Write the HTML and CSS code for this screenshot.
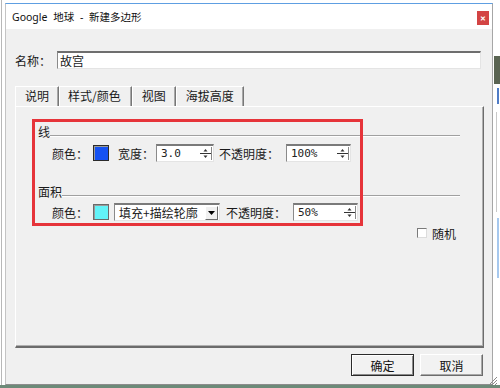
FILE: index.html
```html
<!DOCTYPE html>
<html lang="zh-CN">
<head>
  <meta charset="UTF-8" />
  <title>Google 地球 - 新建多边形</title>
  <link rel="stylesheet" href="styles.css">
</head>
<body>

<div class="screen">
  <div class="desk">
    <div class="window">
      <div class="titlebar">
        <span class="title">Google 地球 - 新建多边形</span>
        <span class="close">&#x2715;</span>
      </div>

      <div class="client">
        <div class="name-row">
          <label>名称：</label>
          <div class="textbox">故宫</div>
        </div>

        <div class="tabs">
          <div class="tab">说明</div>
          <div class="tab active">样式/颜色</div>
          <div class="tab">视图</div>
          <div class="tab">海拔高度</div>
        </div>

        <div class="panel">
          <div class="group-title">线</div>
          <div class="row">
            <span class="lbl">颜色：</span>
            <span class="swatch blue"></span>
            <span class="lbl gap">宽度：</span>
            <div class="spin w-width">
              <span class="val">3.0</span>
              <svg class="spinner" width="13" height="13" viewBox="0 0 13 13">
                <polygon points="6.5,2 4.5,4.5 8.5,4.5" fill="#333"/>
                <line x1="1" y1="6.5" x2="12" y2="6.5" stroke="#333"/>
                <polygon points="4.5,8.5 8.5,8.5 6.5,11" fill="#333"/>
                <line x1="12.5" y1="0" x2="12.5" y2="13" stroke="#888"/>
              </svg>
            </div>
            <span class="lbl gap-s">不透明度：</span>
            <div class="spin w-op">
              <span class="val">100%</span>
              <svg class="spinner" width="13" height="13" viewBox="0 0 13 13">
                <polygon points="6.5,2 4.5,4.5 8.5,4.5" fill="#333"/>
                <line x1="1" y1="6.5" x2="12" y2="6.5" stroke="#333"/>
                <polygon points="4.5,8.5 8.5,8.5 6.5,11" fill="#333"/>
                <line x1="12.5" y1="0" x2="12.5" y2="13" stroke="#888"/>
              </svg>
            </div>
          </div>

          <div class="group-title second">面积</div>
          <div class="row tight">
            <span class="lbl">颜色：</span>
            <span class="swatch cyan"></span>
            <div class="combo">
              <span class="val">填充+描绘轮廓</span>
              <span class="arrow">
                <svg width="7" height="4" viewBox="0 0 7 4"><polygon points="0,0 7,0 3.5,4" fill="#000"/></svg>
              </span>
            </div>
            <span class="lbl gap-m">不透明度：</span>
            <div class="spin w-op">
              <span class="val">50%</span>
              <svg class="spinner" width="13" height="13" viewBox="0 0 13 13">
                <polygon points="6.5,2 4.5,4.5 8.5,4.5" fill="#333"/>
                <line x1="1" y1="6.5" x2="12" y2="6.5" stroke="#333"/>
                <polygon points="4.5,8.5 8.5,8.5 6.5,11" fill="#333"/>
                <line x1="12.5" y1="0" x2="12.5" y2="13" stroke="#888"/>
              </svg>
            </div>
          </div>

          <label class="check">
            <span class="box"></span>
            <span>随机</span>
          </label>

          <!-- anotación roja sobre el grupo -->
          <div class="mark"></div>
        </div>

        <div class="actions">
          <button class="btn default">确定</button>
          <button class="btn">取消</button>
        </div>
      </div>
    </div>

    <div class="backdrop">
      <span class="bd-photo"></span>
      <span class="bd-icon"></span>
      <span class="bd-b"></span>
      <span class="bd-bar"></span>
    </div>
  </div>
  <div class="taskbar"></div>

  <svg class="grip" width="12" height="12" viewBox="0 0 12 12">
    <path d="M11 3L3 11M11 6L6 11M11 9L9 11" stroke="#8a8a8a" stroke-width="1"/>
  </svg>
</div>

</body>
</html>
```

FILE: styles.css
```css
/* Reset */
* {
  box-sizing: border-box;
}
body {
  margin: 0;
  width: 500px;
  height: 388px;
  overflow: hidden;
  background: #fff;
  font-family: "Noto Sans CJK SC", "Noto Sans", sans-serif;
  font-size: 12px;
  color: #1a1a1a;
}
.screen {
  position: relative;
  display: flex;
  flex-direction: column;
  height: 388px;
}
.desk {
  display: flex;
  flex: 1;
  margin-left: 1px;
  border-left: 1px solid #b8b8b8;
}

/* Ventana */
.window {
  margin: 3px 0 0 3px;
  width: 488px;
  display: flex;
  flex-direction: column;
  border: 1px solid #c4c4c4;
  border-top-color: #5e9fe2;
  border-right-color: #a6a6a6;
  border-bottom-color: #8c8c8c;
  background: #f0f0f0;
}
.titlebar {
  height: 25px;
  display: flex;
  align-items: center;
  background: #fff;
  padding-left: 6px;
}
.title {
  font-family: "Noto Sans", "Noto Sans CJK SC", sans-serif;
  font-size: 10.5px;
  color: #111;
  word-spacing: 3px;
}
.close {
  margin: 3px 3px 0 auto;
  width: 12px;
  height: 14px;
  background: #d34444;
  color: #fff;
  font-size: 7px;
  font-weight: 700;
  display: flex;
  align-items: center;
  justify-content: center;
}
.client {
  flex: 1;
  display: flex;
  flex-direction: column;
  padding: 22px 8px 8px 9px;
}

/* Nombre */
.name-row {
  display: flex;
  align-items: center;
  gap: 6px;
  height: 18px;
  margin-right: 3px;
}
.name-row label {
  width: 36px;
}
.textbox {
  flex: 1;
  height: 18px;
  line-height: 15px;
  background: #fff;
  border-top: 2px solid #6e6e6e;
  border-left: 1px solid #8a8a8a;
  border-right: 1px solid #e4e4e4;
  border-bottom: 1px solid #e4e4e4;
  padding-left: 2px;
}

/* Pestañas */
.tabs {
  display: flex;
  margin-top: 17px;
  height: 20px;
}
.tab {
  height: 20px;
  line-height: 18px;
  padding: 0 9px;
  border-top: 1px solid #fff;
  border-left: 1px solid #fff;
  border-right: 1px solid #777;
  box-shadow: inset -1px 0 0 #a8a8a8;
}
.tab.active {
  padding: 0 10px 0 8px;
}
.panel {
  position: relative;
  height: 242px;
  display: flex;
  flex-direction: column;
  padding: 18px 0 0 22px;
  border-top: 1px solid #fff;
  border-left: 1px solid #fff;
  border-right: 1px solid #6c6c6c;
  border-bottom: 2px solid #6c6c6c;
  box-shadow: inset -1px -1px 0 #b0b0b0;
}

/* Grupos */
.group-title {
  width: 422px;
  height: 14px;
  line-height: 14px;
  display: flex;
  align-items: center;
}
.group-title::after {
  content: "";
  flex: 1;
  margin-top: 7px;
  border-top: 1px solid #a0a0a0;
  border-bottom: 1px solid #fff;
}
.group-title.second {
  margin-top: 23px;
}
.row {
  display: flex;
  align-items: center;
  height: 18px;
  margin: 5px 0 0 14px;
}
.row.tight {
  margin-top: 4px;
}
.lbl {
  width: 36px;
  white-space: nowrap;
}
.lbl.gap {
  margin-left: 9px;
  margin-right: 2px;
}
.lbl.gap-s {
  width: 60px;
  margin-left: 5px;
  margin-right: 7px;
}
.lbl.gap-m {
  width: 60px;
  margin-left: 6px;
  margin-right: 7px;
}
.swatch {
  width: 16px;
  height: 16px;
  margin-left: 5px;
  border: 1px solid #2b2b2b;
  box-shadow: inset 1px 1px 0 #9a9a9a;
}
.swatch.blue {
  background: #1652f2;
}
.swatch.cyan {
  background: #62f3f8;
  border-color: #6a6a6a;
}
.spin {
  height: 18px;
  display: flex;
  align-items: center;
  background: #fff;
  border-top: 2px solid #7a7a7a;
  border-left: 1px solid #8a8a8a;
  border-right: 1px solid #e4e4e4;
  border-bottom: 1px solid #e4e4e4;
  padding-left: 4px;
  font-family: "DejaVu Sans Mono", "Liberation Mono", monospace;
  font-size: 11px;
  color: #222;
}
.spin .val {
  flex: 1;
}
.spinner {
  margin-right: 1px;
}
.w-width {
  width: 58px;
}
.w-op {
  width: 65px;
}
.combo {
  width: 106px;
  height: 18px;
  margin-left: 5px;
  display: flex;
  align-items: center;
  background: #fff;
  border-top: 2px solid #7a7a7a;
  border-left: 1px solid #8a8a8a;
  border-right: 1px solid #e4e4e4;
  border-bottom: 1px solid #e4e4e4;
}
.combo .val {
  flex: 1;
  padding-left: 4px;
}
.combo .arrow {
  width: 13px;
  height: 14px;
  margin-right: 1px;
  display: flex;
  align-items: center;
  justify-content: center;
  background: #f0f0f0;
  border-top: 1px solid #fff;
  border-left: 1px solid #fff;
  border-right: 1px solid #6c6c6c;
  border-bottom: 1px solid #6c6c6c;
}
.check {
  align-self: flex-end;
  display: flex;
  align-items: center;
  gap: 5px;
  margin: 5px 27px 0 0;
  height: 14px;
}
.check .box {
  width: 10px;
  height: 10px;
  background: #fff;
  border-top: 1px solid #7a7a7a;
  border-left: 1px solid #7a7a7a;
  border-right: 1px solid #dcdcdc;
  border-bottom: 1px solid #dcdcdc;
}
.mark {
  position: absolute;
  left: 16px;
  top: 12px;
  width: 331px;
  height: 107px;
  border: 3px solid #e6343a;
}

/* Botones */
.actions {
  display: flex;
  justify-content: flex-end;
  gap: 6px;
  margin: 6px 1px 0 0;
}
.btn {
  width: 63px;
  height: 22px;
  padding: 0;
  background: #f2f2f2;
  font-family: "Noto Sans CJK SC", sans-serif;
  font-size: 12px;
  color: #111;
  border: 1px solid;
  border-color: #fff #6c6c6c #6c6c6c #fff;
  box-shadow: inset -1px -1px 0 #a8a8a8;
}
.btn.default {
  border-color: #2a2a2a;
  box-shadow: inset 1px 1px 0 #fff, inset -1px -1px 0 #8a8a8a;
}

/* Fondo a la derecha */
.backdrop {
  flex: 1;
  display: flex;
  flex-direction: column;
  padding-top: 56px;
}
.backdrop span {
  display: block;
}
.bd-photo {
  height: 28px;
  margin-left: 1px;
  background: #5a6452;
}
.bd-icon {
  height: 16px;
  margin: 4px 1px 0 4px;
  background: #4f7cc6;
}
.bd-b {
  height: 100px;
  margin: 8px 0 0 3px;
  border-left: 1px solid #c8c8c8;
}
.bd-bar {
  height: 60px;
  margin: 6px 0 0 4px;
  border-left: 2px solid #a6c8ee;
}
.taskbar {
  height: 3px;
  background: #6d8a78;
}
.grip {
  position: absolute;
  right: 2px;
  bottom: 2px;
}
```
